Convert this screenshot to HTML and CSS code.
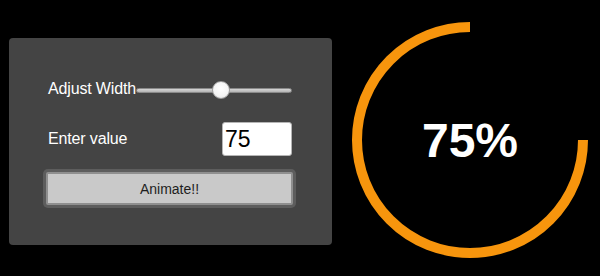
FILE: index.html
```html
<!DOCTYPE html>
<html>
<head>
<meta charset="utf-8">
<link rel="stylesheet" href="styles.css">
</head>
<body>
<div class="page">
  <div class="panel">
    <div class="row row-slider">
      <label class="label">Adjust Width</label>
      <input class="slider" type="range" min="0" max="100" value="55">
    </div>
    <div class="row row-input">
      <label class="label">Enter value</label>
      <input class="num" type="text" value="75">
    </div>
    <button class="btn">Animate!!</button>
  </div>
  <svg class="gauge" width="260" height="276" viewBox="0 0 260 276">
    <path d="M 130 27 A 113 113 0 1 0 243 140" fill="none" stroke="#f7950d" stroke-width="10"/>
    <text class="pct" x="130" y="157" text-anchor="middle">75%</text>
  </svg>
</div>
</body>
</html>
```
FILE: styles.css
```css
html, body {
  margin: 0;
  padding: 0;
  background: #000;
  width: 600px;
  height: 276px;
  overflow: hidden;
  font-family: "Liberation Sans", Arial, sans-serif;
}
.page {
  display: flex;
  align-items: flex-start;
}
.panel {
  margin-left: 9px;
  margin-top: 38px;
  width: 323px;
  height: 207px;
  box-sizing: border-box;
  padding: 41px 40px 0 39px;
  background: #444444;
  border-radius: 4px;
  display: flex;
  flex-direction: column;
}
.row {
  display: flex;
  align-items: center;
  justify-content: space-between;
}
.row-slider {
  height: 20px;
}
.label {
  color: #fff;
  font-size: 16px;
  letter-spacing: -0.15px;
}
.slider {
  -webkit-appearance: none;
  appearance: none;
  width: 156px;
  height: 20px;
  margin: 2px 0 0 0;
  background: transparent;
}
.slider::-webkit-slider-runnable-track {
  height: 5px;
  background: linear-gradient(#d6d6d6, #b4b4b4);
  border: 1px solid #8a8a8a;
  border-radius: 3px;
}
.slider::-webkit-slider-thumb {
  -webkit-appearance: none;
  width: 18px;
  height: 18px;
  margin-top: -7.5px;
  border-radius: 50%;
  background: radial-gradient(circle at 50% 40%, #ffffff 0%, #f4f4f4 60%, #d6d6d6 100%);
  border: 1px solid #9d9d9d;
}
.row-input {
  margin-top: 23px;
}
.num {
  width: 70px;
  height: 34px;
  box-sizing: border-box;
  border: 1px solid #b5b5b5;
  border-radius: 3px;
  padding: 0 0 0 2px;
  font-family: "Liberation Sans", Arial, sans-serif;
  font-size: 23px;
  color: #000;
  background: #fff;
  outline: none;
}
.btn {
  margin-top: 16px;
  margin-left: -2px;
  width: 247px;
  height: 33px;
  box-sizing: border-box;
  border: 2px solid #8f8f8f;
  border-radius: 2px;
  box-shadow: 0 0 0 3px #5d5d5d;
  background: #c9c9c9;
  color: #1e1e1e;
  font-family: "Liberation Sans", Arial, sans-serif;
  font-size: 14px;
  padding: 0;
}
.gauge {
  margin-left: 8px;
  display: block;
}
.pct {
  fill: #fff;
  font-family: "Liberation Sans", Arial, sans-serif;
  font-weight: bold;
  font-size: 48px;
}
```
